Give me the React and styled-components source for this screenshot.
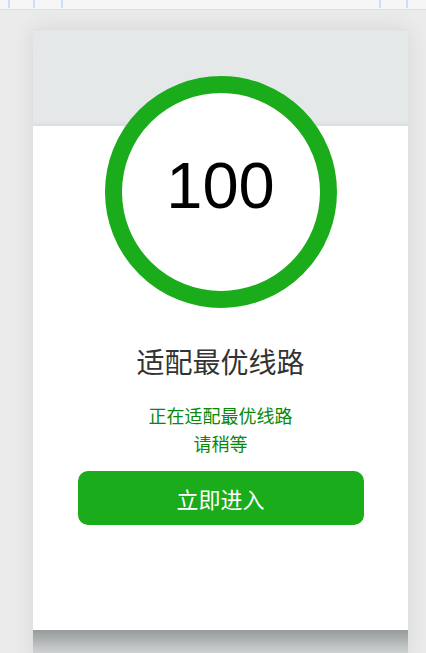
import React from "react";
import styled, { createGlobalStyle } from "styled-components";

const Global = createGlobalStyle`
  html, body { margin: 0; padding: 0; }
  body {
    background: #ebebeb;
    font-family: "Noto Sans CJK SC", "Liberation Sans", sans-serif;
    overflow: hidden;
  }
`;

const Page = styled.div`
  width: 426px;
  height: 653px;
  display: flex;
  flex-direction: column;
  overflow: hidden;
`;

const Ruler = styled.div`
  height: 9px;
  flex: none;
  background: #f6f6f6;
  border-bottom: 1px solid #dedede;
  display: flex;
`;

const Mark = styled.span`
  width: 2px;
  height: 8px;
  margin-left: ${(p) => p.$gap}px;
  background: #cfdff9;
`;

const Stage = styled.div`
  flex: 1;
  padding: 19px 0 0 33px;
  display: flex;
  align-items: flex-start;
`;

const Card = styled.div`
  width: 375px;
  border-top: 1px solid #dcdedf;
  box-shadow: 0 0 22px rgba(0, 0, 0, 0.09);
  display: flex;
  flex-direction: column;
`;

const Header = styled.div`
  height: 96px;
  background: #e5e8e9;
  box-shadow: inset 0 -5px 5px -4px rgba(0, 0, 0, 0.08);
`;

const Body = styled.div`
  background: #ffffff;
  display: flex;
  flex-direction: column;
  align-items: center;
  padding-bottom: 105px;
`;

const Ring = styled.div`
  width: 232px;
  height: 232px;
  box-sizing: border-box;
  margin-top: -50px;
  border: 17px solid #1bac1b;
  border-radius: 50%;
  background: #ffffff;
  display: flex;
  align-items: center;
  justify-content: center;
  position: relative;
  z-index: 1;
`;

const Score = styled.span`
  font-family: "Liberation Sans", Arial, sans-serif;
  font-size: 65px;
  color: #000;
  line-height: 1;
  margin-top: -14px;
  margin-left: 0px;
`;

const Title = styled.div`
  margin-top: 33px;
  font-size: 28px;
  line-height: 40px;
  color: #333;
`;

const Status = styled.div`
  margin-top: 20px;
  font-size: 18px;
  line-height: 28px;
  color: #0a880a;
  text-align: center;
`;

const EnterButton = styled.button`
  margin-top: 14px;
  width: 286px;
  height: 54px;
  border: none;
  border-radius: 10px;
  background: #1bac1b;
  color: #fff;
  font-family: "Noto Sans CJK SC", "Liberation Sans", sans-serif;
  font-size: 22px;
  cursor: pointer;
`;

const Footer = styled.div`
  height: 30px;
  background: linear-gradient(#979a9a, #c3c6c6 60%, #e0e3e3);
`;

export default function App() {
  return (
    <Page>
      <Global />
      <Ruler>
        <Mark $gap={8} />
        <Mark $gap={23} />
        <Mark $gap={26} />
        <Mark $gap={316} />
        <Mark $gap={25} />
      </Ruler>
      <Stage>
        <Card>
          <Header />
          <Body>
            <Ring>
              <Score>100</Score>
            </Ring>
            <Title>适配最优线路</Title>
            <Status>
              正在适配最优线路
              <br />
              请稍等
            </Status>
            <EnterButton>立即进入</EnterButton>
          </Body>
          <Footer />
        </Card>
      </Stage>
    </Page>
  );
}
